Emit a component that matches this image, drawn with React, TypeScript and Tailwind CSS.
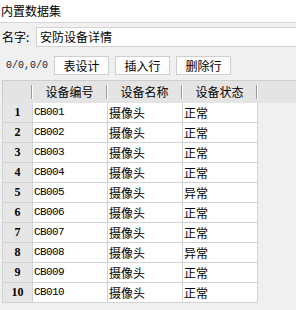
const rows = [
  { no: 1, code: 'CB001', name: '摄像头', status: '正常' },
  { no: 2, code: 'CB002', name: '摄像头', status: '正常' },
  { no: 3, code: 'CB003', name: '摄像头', status: '正常' },
  { no: 4, code: 'CB004', name: '摄像头', status: '正常' },
  { no: 5, code: 'CB005', name: '摄像头', status: '异常' },
  { no: 6, code: 'CB006', name: '摄像头', status: '正常' },
  { no: 7, code: 'CB007', name: '摄像头', status: '正常' },
  { no: 8, code: 'CB008', name: '摄像头', status: '异常' },
  { no: 9, code: 'CB009', name: '摄像头', status: '正常' },
  { no: 10, code: 'CB010', name: '摄像头', status: '正常' },
]

const cjk = "font-['Noto_Sans_CJK_SC','Noto_Sans',sans-serif]"

const HeaderCell = ({ label, width }: { label: string, width: string }) => {
  return (
    <div className={`flex items-center h-full ${width}`}>
      <div className="flex-1 text-center">{label}</div>
      <div className="w-[2px] h-[14px] border-l border-[#9a9a9a] border-r border-r-white" />
    </div>
  )
}

const ToolButton = ({ label }: { label: string }) => {
  return (
    <button className="w-[55px] h-[19px] bg-[#fdfdfd] border border-[#cfcfcf] text-[12px] leading-[17px] text-black">
      {label}
    </button>
  )
}

const App = () => {
  return (
    <div className={`w-[296px] h-[310px] overflow-hidden bg-[#f0f0f0] text-black text-[12px] ${cjk}`}>
      <div className="h-[23px] bg-white border-b border-[#d6d6d6] pl-[1px] leading-[22px] text-[12px]">
        内置数据集
      </div>

      <div className="flex items-center pt-[4px] pl-[2px]">
        <span className="w-[34px] text-[12px]">名字:</span>
        <div className="flex-1 h-[20px] bg-white border border-[#d2d2d2] border-r-0 pl-[3px] leading-[18px] text-[12px]">
          安防设备详情
        </div>
      </div>

      <div className="flex items-center mt-[9px] h-[19px]">
        <span className="w-[54px] pl-[6px] font-['Liberation_Mono',monospace] text-[10px] text-[#202040]">0/0,0/0</span>
        <div className="flex gap-[6px]">
          <ToolButton label="表设计" />
          <ToolButton label="插入行" />
          <ToolButton label="删除行" />
        </div>
      </div>

      <div className="mt-[5px] ml-[2px]">
        <div className="flex h-[23px] bg-[#e4e4e4] border-t border-l border-[#cdcdcd] text-[12px]">
          <HeaderCell label="" width="w-[30px]" />
          <HeaderCell label="设备编号" width="w-[75px]" />
          <HeaderCell label="设备名称" width="w-[75px]" />
          <HeaderCell label="设备状态" width="w-[75px]" />
          <div className="flex-1" />
        </div>

        {rows.map((r) => (
          <div key={r.no} className="flex h-[20px]">
            <div className="w-[31px] bg-[#e6e6e6] border-l border-r border-b border-[#d2d2d2] text-center leading-[19px] font-['Liberation_Serif',serif] font-semibold text-[12px]">
              {r.no}
            </div>
            <div className="w-[75px] bg-white border-r border-b border-[#d2d2d2] pl-[1px] leading-[19px] font-['Liberation_Mono',monospace] text-[11px] tracking-[-0.6px]">
              {r.code}
            </div>
            <div className="w-[75px] bg-white border-r border-b border-[#d2d2d2] pl-[1px] leading-[19px] text-[12px]">
              {r.name}
            </div>
            <div className="w-[75px] bg-white border-r border-b border-[#d2d2d2] pl-[1px] leading-[19px] text-[12px]">
              {r.status}
            </div>
          </div>
        ))}
      </div>
    </div>
  )
}

export default App
